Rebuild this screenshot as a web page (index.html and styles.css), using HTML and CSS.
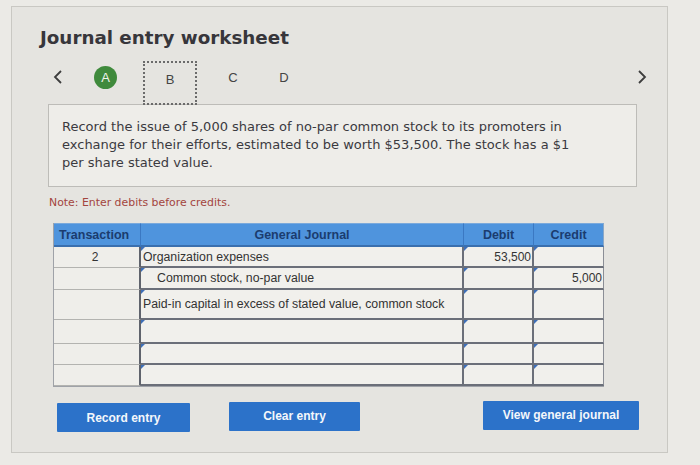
FILE: index.html
```html
<!DOCTYPE html>
<html>
<head>
<meta charset="utf-8">
<link rel="stylesheet" href="styles.css">
</head>
<body>
<div class="panel">
  <h1 class="title">Journal entry worksheet</h1>
  <div class="nav">
    <svg class="chev chev-left" width="12" height="16" viewBox="0 0 12 16"><path d="M9 2 L3 8 L9 14" fill="none" stroke="#3d3d3d" stroke-width="1.8"/></svg>
    <span class="step step-done">A</span>
    <span class="step step-cur">B</span>
    <span class="step">C</span>
    <span class="step">D</span>
    <span class="spacer"></span>
    <svg class="chev chev-right" width="12" height="16" viewBox="0 0 12 16"><path d="M3 2 L9 8 L3 14" fill="none" stroke="#3d3d3d" stroke-width="1.8"/></svg>
  </div>
  <div class="info">Record the issue of 5,000 shares of no-par common stock to its promoters in exchange for their efforts, estimated to be worth $53,500. The stock has a $1 per share stated value.</div>
  <div class="note">Note: Enter debits before credits.</div>
  <div class="journal">
    <div class="h h-tr">Transaction</div>
    <div class="h h-gj">General Journal</div>
    <div class="h h-num">Debit</div>
    <div class="h h-num h-last">Credit</div>

    <div class="c tr">2</div>
    <div class="c in acct">Organization expenses</div>
    <div class="c in num">53,500</div>
    <div class="c in num last"></div>

    <div class="c tr"></div>
    <div class="c in acct indent">Common stock, no-par value</div>
    <div class="c in num"></div>
    <div class="c in num last">5,000</div>

    <div class="c tr"></div>
    <div class="c in acct">Paid-in capital in excess of stated value, common stock</div>
    <div class="c in num"></div>
    <div class="c in num last"></div>

    <div class="c tr"></div>
    <div class="c in acct"></div>
    <div class="c in num"></div>
    <div class="c in num last"></div>

    <div class="c tr"></div>
    <div class="c in acct"></div>
    <div class="c in num"></div>
    <div class="c in num last"></div>

    <div class="c tr"></div>
    <div class="c in acct"></div>
    <div class="c in num"></div>
    <div class="c in num last"></div>
  </div>
  <div class="actions">
    <button class="btn btn-record">Record entry</button>
    <button class="btn btn-clear">Clear entry</button>
    <span class="spacer"></span>
    <button class="btn btn-view">View general journal</button>
  </div>
</div>
</body>
</html>
```

FILE: styles.css
```css
html, body {
  margin: 0;
  padding: 0;
}
body {
  background: #ebeae6;
  width: 700px;
  height: 465px;
  overflow: hidden;
  font-family: "DejaVu Sans", Verdana, sans-serif;
}
.panel {
  margin: 6px 0 0 11px;
  width: 657px;
  height: 447px;
  box-sizing: border-box;
  border: 1px solid #c9c8c3;
  background: #e5e4e0;
  display: flex;
  flex-direction: column;
}
.title {
  margin: 19px 0 0 28px;
  font-size: 18.3px;
  line-height: 24px;
  font-weight: bold;
  color: #37363b;
}
.nav {
  display: flex;
  align-items: center;
  margin-top: 11px;
  height: 32px;
  padding-left: 40px;
  padding-right: 19px;
}
.chev {
  display: block;
}
.chev-left {
  margin-right: 30px;
}
.step {
  font-family: "Liberation Sans", Arial, sans-serif;
  font-size: 13px;
  color: #444;
  display: flex;
  align-items: center;
  justify-content: center;
}
.step-done {
  width: 23px;
  height: 23px;
  border-radius: 50%;
  background: #3f8a3c;
  color: #eef3ea;
  margin-right: 26px;
}
.step-cur {
  align-self: flex-start;
  align-items: flex-start;
  padding-top: 9px;
  width: 54px;
  height: 44px;
  box-sizing: border-box;
  border: 2px dotted #6b6b6b;
  margin-right: 29px;
  position: relative;
  z-index: 1;
}
.step:nth-child(4) {
  width: 14px;
  margin-right: 37px;
}
.step:nth-child(5) {
  width: 14px;
}
.spacer {
  flex: 1;
}
.info {
  margin: 11px 0 0 36px;
  width: 589px;
  height: 83px;
  box-sizing: border-box;
  border: 1px solid #bdbcb8;
  background: #eeede9;
  padding: 13px 50px 0 13px;
  font-size: 13px;
  line-height: 17.8px;
  color: #3b3a3f;
}
.note {
  margin: 9px 0 0 37px;
  font-size: 10.9px;
  line-height: 14px;
  color: #a3453e;
}
.journal {
  margin: 13px 0 0 41px;
  display: grid;
  grid-template-columns: 87px 323px 70px 70px;
  grid-template-rows: 24px 21px 22px 30px 24px 21px 21px;
  width: 550px;
  font-family: "Liberation Sans", Arial, sans-serif;
  font-size: 12px;
  color: #333;
  border-left: 1px solid #9fa2a8;
  border-bottom: 1px solid #9fa2a8;
}
.h {
  background: #4f94dd;
  color: #1b3c6f;
  font-weight: bold;
  font-size: 12.5px;
  display: flex;
  align-items: center;
  justify-content: center;
  border-right: 1px solid #3b78c2;
  border-top: 1px solid #7aa9dc;
  border-bottom: 2px solid #3a6fae;
}
.h-tr {
  justify-content: flex-start;
  padding-left: 5px;
}
.h-last {
  border-right: 1px solid #8aa7c7;
}
.c {
  box-sizing: border-box;
  background: #efeeea;
  display: flex;
  align-items: center;
  position: relative;
  white-space: nowrap;
}
.tr {
  justify-content: center;
  border-right: 2px solid #5f636c;
  border-bottom: 1px solid #b3b3b0;
  padding-right: 3px;
}
.in {
  border-bottom: 2px solid #6b6f79;
  border-right: 2px solid #6b6f79;
  background: #f1f0ec;
}
.in::before {
  content: "";
  position: absolute;
  left: 0;
  top: 0;
  border-top: 4px solid #3e6fb8;
  border-right: 4px solid transparent;
  border-bottom: 3px solid transparent;
  width: 0;
  height: 0;
}
.acct {
  padding-left: 2px;
  font-size: 12.3px;
}
.indent {
  padding-left: 16px;
}
.num {
  justify-content: flex-end;
  padding-right: 1px;
  align-items: flex-start;
  padding-top: 3px;
}
.last {
  border-right: 1px solid #8b8e96;
}
.actions {
  display: flex;
  align-items: center;
  margin: 16px 0 0 45px;
  padding-right: 28px;
}
.btn {
  font-family: "Liberation Sans", Arial, sans-serif;
  font-weight: bold;
  font-size: 12px;
  color: #f4f7fb;
  background: #2c72c9;
  border: none;
  border-radius: 1px;
  height: 29px;
  padding: 0;
  margin: 0;
}
.btn-record {
  width: 133px;
  margin-right: 39px;
}
.btn-clear {
  width: 131px;
  margin-top: -3px;
}
.btn-view {
  width: 156px;
  margin-top: -5px;
}
```
